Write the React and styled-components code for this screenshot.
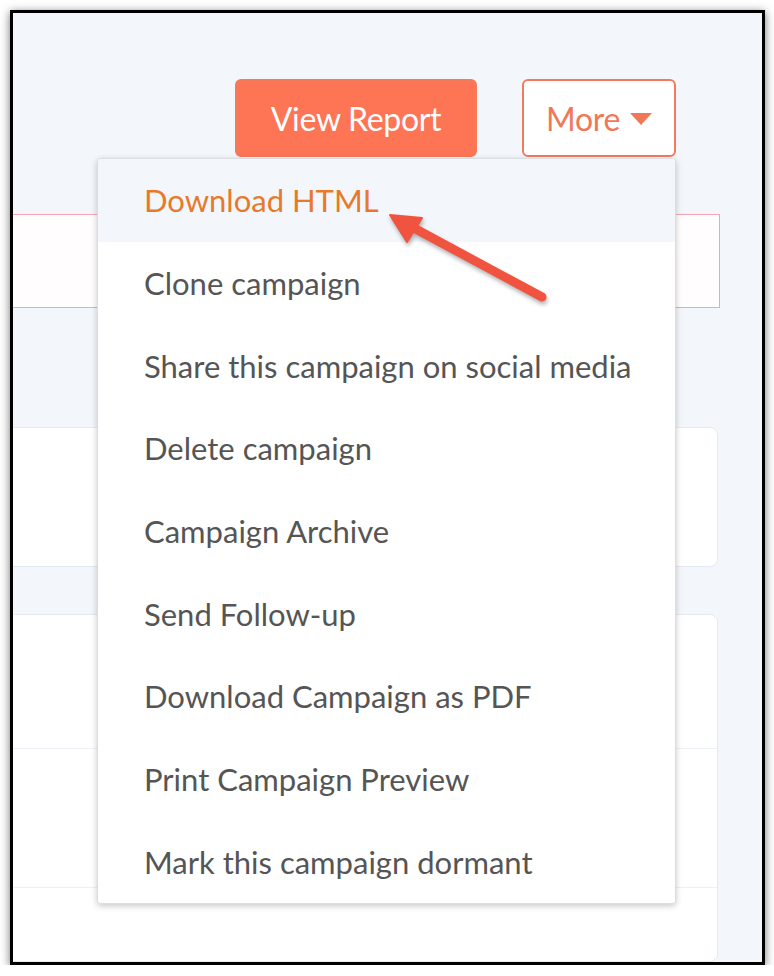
import React from "react";
import styled, { createGlobalStyle } from "styled-components";

const GlobalStyle = createGlobalStyle`
  html, body {
    margin: 0;
    padding: 0;
    background: #ffffff;
  }
  body {
    font-family: Lato, "Open Sans", "Liberation Sans", sans-serif;
  }
`;

const Frame = styled.div`
  position: relative;
  box-sizing: content-box;
  margin: 10px 0 0 10px;
  width: 749px;
  height: 949px;
  border: 3px solid #000;
  background: #f3f7fb;
  box-shadow: 0 2px 9px rgba(0, 0, 0, 0.55);
  overflow: hidden;
  display: flex;
  flex-direction: column;
`;

const Toolbar = styled.div`
  display: flex;
  justify-content: flex-end;
  gap: 45px;
  padding: 66px 86px 0 0;
`;

const ButtonGroup = styled.div`
  position: relative;
`;

const Button = styled.button`
  box-sizing: border-box;
  height: 78px;
  border-radius: 6px;
  font-family: Lato, "Open Sans", sans-serif;
  font-size: 32px;
  font-weight: 400;
  display: flex;
  align-items: center;
  justify-content: center;
  gap: 10px;
  cursor: pointer;
  border: 2px solid #f47a5c;
  background: ${(p) => (p.$primary ? "#fe7555" : "#ffffff")};
  color: ${(p) => (p.$primary ? "#ffffff" : "#f27757")};
  width: ${(p) => p.$width}px;
  padding: 0;
  letter-spacing: -0.3px;
`;

const Caret = styled.svg`
  width: 22px;
  height: 12px;
  margin-top: 2px;
`;

const Menu = styled.ul`
  position: absolute;
  top: 100%;
  right: 0;
  width: 577px;
  margin: 1px 0 0;
  padding: 0;
  list-style: none;
  background: #ffffff;
  border: 1px solid #d9dee4;
  border-radius: 4px;
  box-shadow: 0 2px 6px rgba(0, 0, 0, 0.22);
  overflow: hidden;
  z-index: 2;
`;

const MenuItem = styled.li`
  height: 82.7px;
  display: flex;
  align-items: center;
  padding-left: 46px;
  font-size: 31px;
  letter-spacing: 0;
  color: ${(p) => (p.$active ? "#e8792b" : "#555555")};
  background: ${(p) => (p.$active ? "#f3f7fb" : "#ffffff")};
`;

const Content = styled.div`
  flex: 1;
  display: flex;
  flex-direction: column;
  margin-left: -20px;
  width: 727px;
`;

const Notice = styled.div`
  box-sizing: border-box;
  margin-top: 57px;
  height: 94px;
  background: #fffdfd;
  border: 1.5px solid #f4a5b2;
`;

const Card = styled.div`
  box-sizing: border-box;
  margin-top: ${(p) => p.$gap}px;
  height: ${(p) => (p.$height ? `${p.$height}px` : "auto")};
  flex: ${(p) => (p.$grow ? 1 : "none")};
  width: 725px;
  background: #ffffff;
  border: 1px solid #e4eaf1;
  border-radius: 8px;
  display: flex;
  flex-direction: column;
`;

const CardRow = styled.div`
  height: ${(p) => (p.$height ? `${p.$height}px` : "auto")};
  flex: ${(p) => (p.$height ? "none" : 1)};
  border-top: ${(p) => (p.$first ? "none" : "1px solid #edf1f6")};
`;

/* annotation arrow pointing at the first menu entry */
const Pointer = styled.svg`
  position: absolute;
  left: 357px;
  top: 187px;
  width: 200px;
  height: 125px;
  pointer-events: none;
  z-index: 3;
  filter: drop-shadow(1px 3px 2px rgba(0, 0, 0, 0.3));
`;

const items = [
  "Download HTML",
  "Clone campaign",
  "Share this campaign on social media",
  "Delete campaign",
  "Campaign Archive",
  "Send Follow-up",
  "Download Campaign as PDF",
  "Print Campaign Preview",
  "Mark this campaign dormant",
];

export default function App() {
  return (
    <>
      <GlobalStyle />
      <Frame>
        <Toolbar>
          <Button $primary $width={242}>View Report</Button>
          <ButtonGroup>
            <Button $width={154}>
              More
              <Caret viewBox="0 0 22 12">
                <path d="M0 0 H22 L11 12 Z" fill="#f27757" />
              </Caret>
            </Button>
            <Menu>
              {items.map((label, i) => (
                <MenuItem key={label} $active={i === 0}>
                  {label}
                </MenuItem>
              ))}
            </Menu>
          </ButtonGroup>
        </Toolbar>
        <Content>
          <Notice />
          <Card $gap={119} $height={140} />
          <Card $gap={47} $grow>
            <CardRow $first $height={133} />
            <CardRow $height={138} />
            <CardRow />
          </Card>
        </Content>
        <Pointer viewBox="0 0 200 125">
          <line
            x1="42"
            y1="27"
            x2="172"
            y2="97"
            stroke="#f0533f"
            strokeWidth="9"
            strokeLinecap="round"
          />
          <path
            d="M20 15 L52 18 L37 42 Z"
            fill="#f0533f"
            stroke="#f0533f"
            strokeWidth="2"
            strokeLinejoin="round"
          />
        </Pointer>
      </Frame>
    </>
  );
}
